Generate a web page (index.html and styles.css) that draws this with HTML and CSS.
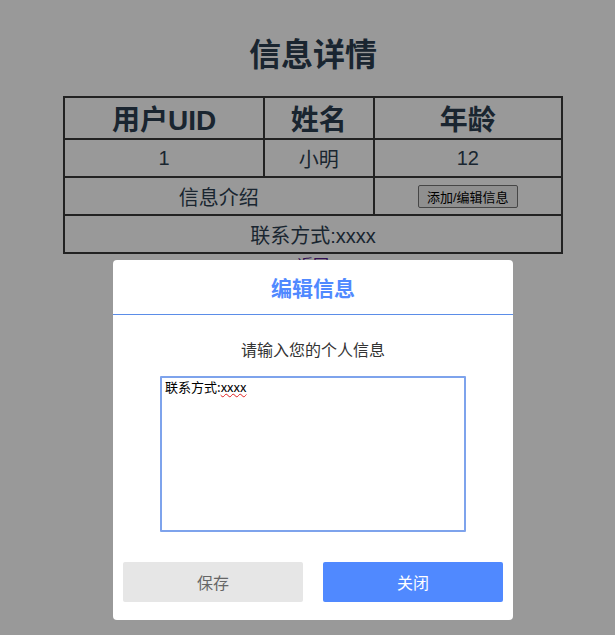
FILE: index.html
```html
<!DOCTYPE html>
<html lang="zh-CN">
<head>
<meta charset="utf-8">
<title>信息详情</title>
<link rel="stylesheet" href="styles.css">
</head>
<body>
<div class="page">
  <h1 class="title">信息详情</h1>
  <table class="info">
    <colgroup>
      <col class="c1"><col class="c2"><col class="c3">
    </colgroup>
    <tr class="head">
      <th>用户UID</th><th>姓名</th><th>年龄</th>
    </tr>
    <tr class="row">
      <td>1</td><td>小明</td><td>12</td>
    </tr>
    <tr class="row">
      <td colspan="2">信息介绍</td><td><button class="edit-btn">添加/编辑信息</button></td>
    </tr>
    <tr class="row">
      <td colspan="3">联系方式:xxxx</td>
    </tr>
  </table>
  <a class="back" href="#">返回</a>
</div>
<div class="mask"></div>
<div class="dialog">
  <div class="dialog-head">编辑信息</div>
  <div class="dialog-body">
    <p class="hint">请输入您的个人信息</p>
    <div class="textbox" role="textbox" aria-multiline="true">联系方式:<span class="typo">xxxx</span></div>
  </div>
  <div class="dialog-foot">
    <button class="btn btn-save">保存</button>
    <button class="btn btn-close">关闭</button>
  </div>
</div>
</body>
</html>
```
FILE: styles.css
```css
html, body {
  margin: 0;
  padding: 0;
  background: #fff;
}
body {
  font-family: "Liberation Sans", "Noto Sans CJK SC", sans-serif;
  color: #2c3e50;
}
.page {
  display: flex;
  flex-direction: column;
  align-items: center;
  padding-left: 11px;
  padding-top: 32px;
}
.title {
  margin: 0 0 18px;
  font-size: 32px;
  line-height: 46px;
  font-weight: bold;
}
.info {
  width: 500px;
  border-collapse: collapse;
  border: 2px solid #3a3a3a;
}
.info th, .info td {
  border: 2px solid #3a3a3a;
  text-align: center;
  padding: 0;
}
.c1 { width: 201px; }
.c2 { width: 110px; }
.c3 { width: 189px; }
.head th {
  height: 37px;
  font-size: 28px;
  font-weight: bold;
}
.row td {
  height: 36px;
  font-size: 20px;
}
.edit-btn {
  font-family: "Liberation Sans", "Noto Sans CJK SC", sans-serif;
  font-size: 13px;
  height: 23px;
  width: 100px;
  padding: 0;
  background: #efefef;
  border: 1px solid #767676;
  border-radius: 2px;
  color: #000;
}
.back {
  font-size: 16px;
  line-height: 24px;
  color: #551a8b;
  text-decoration: none;
}
.mask {
  position: fixed;
  inset: 0;
  background: rgba(0, 0, 0, 0.4);
}
.dialog {
  position: fixed;
  left: 113px;
  top: 260px;
  width: 400px;
  height: 360px;
  background: #fff;
  border-radius: 4px;
  display: flex;
  flex-direction: column;
  font-family: "Noto Sans CJK SC", sans-serif;
}
.dialog-head {
  height: 54px;
  border-bottom: 1px solid #5b8de8;
  display: flex;
  align-items: center;
  justify-content: center;
  font-size: 21px;
  font-weight: bold;
  color: #5089ff;
}
.dialog-body {
  display: flex;
  flex-direction: column;
  align-items: center;
}
.hint {
  margin: 22px 0 0;
  font-size: 16px;
  line-height: 24px;
  color: #333;
}
.textbox {
  margin-top: 15px;
  box-sizing: border-box;
  width: 306px;
  height: 156px;
  border: 2px solid #7ea3ec;
  border-radius: 1px;
  padding: 1px 3px;
  font-size: 13px;
  line-height: 16px;
  color: #000;
  text-align: left;
}
.typo {
  text-decoration: underline wavy #e02020;
  text-decoration-thickness: 1px;
}
.dialog-foot {
  margin-top: auto;
  padding: 0 10px 18px;
  display: flex;
  gap: 20px;
}
.btn {
  flex: 1;
  height: 40px;
  border: none;
  border-radius: 2px;
  font-family: "Noto Sans CJK SC", sans-serif;
  font-size: 16px;
}
.btn-save {
  background: #e6e6e6;
  color: #666;
}
.btn-close {
  background: #5089ff;
  color: #fff;
}
```
